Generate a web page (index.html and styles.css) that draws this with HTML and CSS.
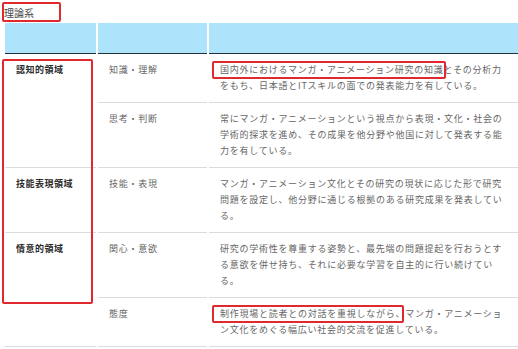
FILE: index.html
```html
<!DOCTYPE html>
<html lang="ja">
<head>
<meta charset="utf-8">
<link rel="stylesheet" href="styles.css">
</head>
<body>
<div class="page">
  <div class="title"><span class="mark mark-title">理論系</span></div>
  <div class="table-wrap">
    <table class="policy">
      <colgroup>
        <col class="c1"><col class="c2"><col class="c3">
      </colgroup>
      <thead>
        <tr><th></th><th></th><th></th></tr>
      </thead>
      <tbody>
        <tr>
          <td class="domain" rowspan="2">認知的領域</td>
          <td class="aspect">知識・理解</td>
          <td class="desc"><span class="mark mark-text mark-wide">国内外におけるマンガ・アニメーション研究の知識</span>とその分析力をもち、日本語とITスキルの面での発表能力を有している。</td>
        </tr>
        <tr>
          <td class="aspect">思考・判断</td>
          <td class="desc">常にマンガ・アニメーションという視点から表現・文化・社会の学術的探求を進め、その成果を他分野や他国に対して発表する能力を有している。</td>
        </tr>
        <tr>
          <td class="domain">技能表現領域</td>
          <td class="aspect">技能・表現</td>
          <td class="desc">マンガ・アニメーション文化とその研究の現状に応じた形で研究問題を設定し、他分野に通じる根拠のある研究成果を発表している。</td>
        </tr>
        <tr>
          <td class="domain" rowspan="2">情意的領域</td>
          <td class="aspect">関心・意欲</td>
          <td class="desc">研究の学術性を尊重する姿勢と、最先端の問題提起を行おうとする意欲を併せ持ち、それに必要な学習を自主的に行い続けている。</td>
        </tr>
        <tr>
          <td class="aspect">態度</td>
          <td class="desc"><span class="mark mark-text mark-tight">制作現場と読者との対話を重視しながら、</span>マンガ・アニメーション文化をめぐる幅広い社会的交流を促進している。</td>
        </tr>
      </tbody>
    </table>
    <div class="col-mark"></div>
  </div>
</div>
</body>
</html>
```
FILE: styles.css
```css
html, body {
  margin: 0;
  padding: 0;
  overflow: hidden;
  background: #fff;
}

body {
  font-family: "Noto Sans CJK JP", "Noto Sans", sans-serif;
  color: #555;
}

.page {
  width: 518px;
}

.title {
  padding: 5px 0 0 4px;
  height: 18px;
  font-size: 10px;
  line-height: 16px;
  color: #444;
}

.mark {
  position: relative;
}

.mark::after {
  content: "";
  position: absolute;
  border: 2px solid #e1282c;
  border-radius: 2px;
  pointer-events: none;
}

.mark-title::after {
  left: -2px;
  right: -27px;
  top: -3px;
  bottom: -2px;
}

.mark-text::after {
  left: -8px;
  top: -2px;
  bottom: -3px;
}

.mark-wide::after {
  right: -2px;
}

.mark-tight::after {
  right: 1px;
}

.table-wrap {
  position: relative;
  margin-left: 3px;
}

.policy {
  border-collapse: separate;
  border-spacing: 2px 0;
  table-layout: fixed;
  width: 521px;
}

.c1 { width: 91px; }
.c2 { width: 109px; }
.c3 { width: 313px; }

.policy th {
  height: 30px;
  padding: 0;
  background: #ade4fb;
  border-bottom: 1px solid #22313a;
}

.policy td {
  vertical-align: top;
  padding: 8px 11px 8px 11px;
  font-size: 9px;
  line-height: 16px;
  letter-spacing: 0.75px;
  border-bottom: 1px solid #dcdcdc;
}

.policy td.domain {
  font-weight: bold;
  color: #2b2b2b;
  letter-spacing: 0.5px;
}

.policy td.aspect {
  color: #666;
}

.policy td.desc {
  color: #666;
  padding-right: 16px;
}

.col-mark {
  position: absolute;
  left: -1px;
  top: 36px;
  width: 87px;
  height: 241px;
  border: 2px solid #e1282c;
  border-radius: 2px;
}
```
